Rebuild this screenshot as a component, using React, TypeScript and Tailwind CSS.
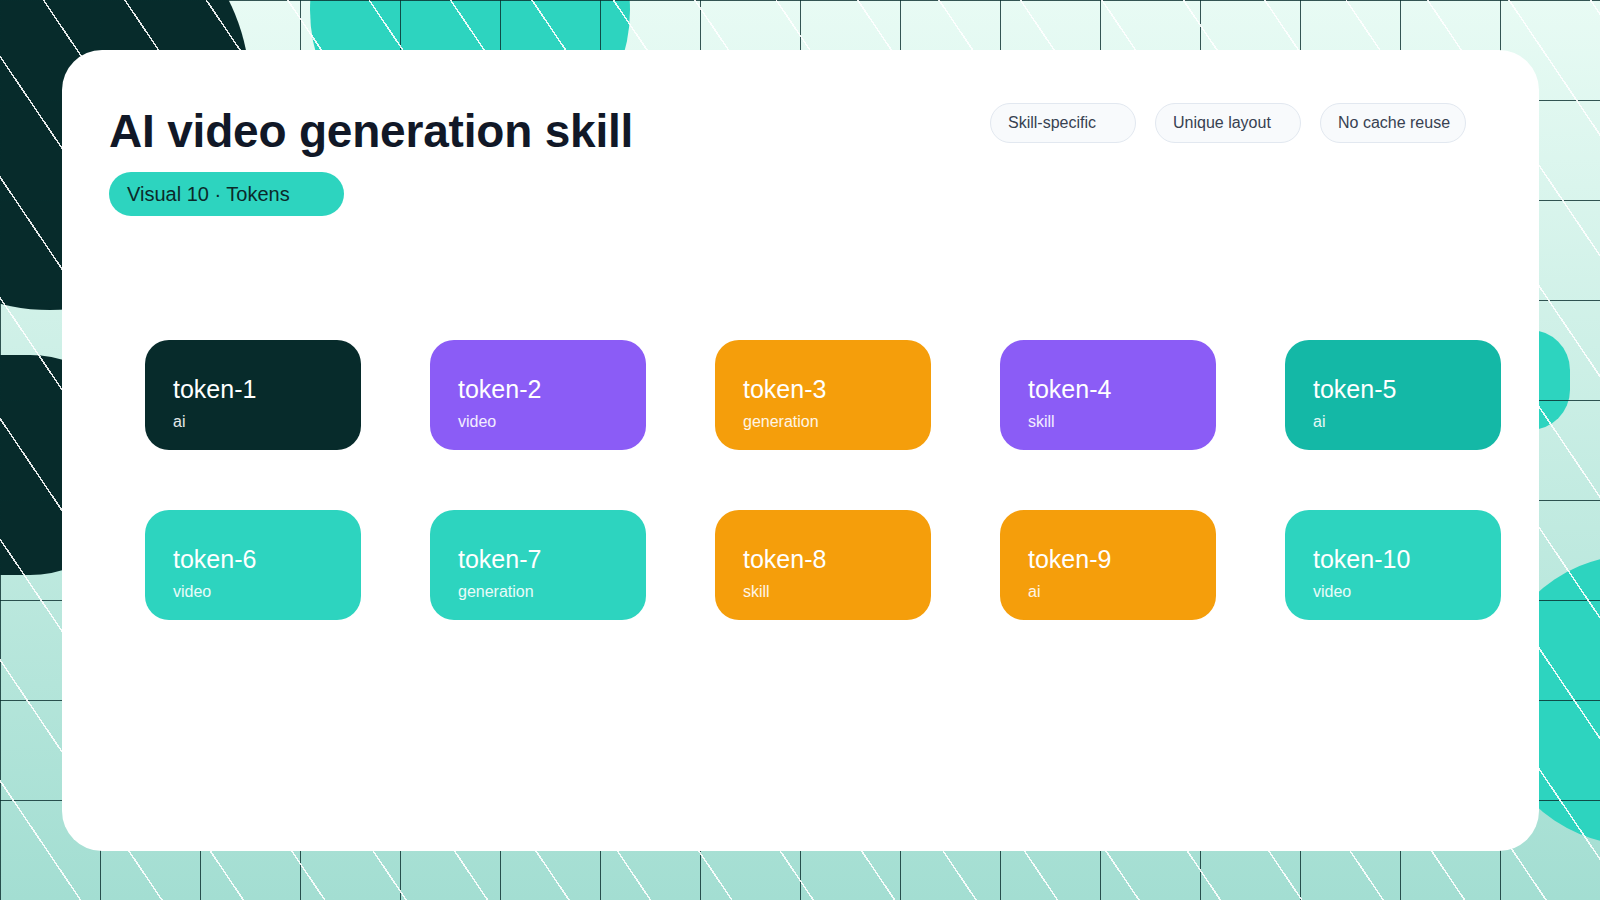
const tokens = [
  { name: "token-1", label: "ai", bg: "bg-[#072b2b]" },
  { name: "token-2", label: "video", bg: "bg-[#8b5cf6]" },
  { name: "token-3", label: "generation", bg: "bg-[#f59e0b]" },
  { name: "token-4", label: "skill", bg: "bg-[#8b5cf6]" },
  { name: "token-5", label: "ai", bg: "bg-[#14b8a6]" },
  { name: "token-6", label: "video", bg: "bg-[#2dd4bf]" },
  { name: "token-7", label: "generation", bg: "bg-[#2dd4bf]" },
  { name: "token-8", label: "skill", bg: "bg-[#f59e0b]" },
  { name: "token-9", label: "ai", bg: "bg-[#f59e0b]" },
  { name: "token-10", label: "video", bg: "bg-[#2dd4bf]" },
];

const chips = ["Skill-specific", "Unique layout", "No cache reuse"];

export default function App() {
  return (
    <div
      className="relative w-[1600px] h-[900px] overflow-hidden bg-gradient-to-b from-[#e8fbf4] to-[#a3ded2]"
      style={{ fontFamily: "'Liberation Sans', Arial, sans-serif" }}
    >
      {/* decorative shapes */}
      <div className="absolute -left-[150px] -top-[110px] w-[400px] h-[420px] rounded-full bg-[#072b2b]" />
      <div className="absolute -left-[260px] top-[355px] w-[400px] h-[220px] rounded-full bg-[#072b2b]" />
      <div className="absolute left-[310px] -top-[150px] w-[320px] h-[320px] rounded-full bg-[#2dd4bf]" />
      <div className="absolute left-[1490px] top-[330px] w-[80px] h-[100px] rounded-full bg-[#2dd4bf]" />
      <div className="absolute left-[1490px] top-[555px] w-[300px] h-[290px] rounded-full bg-[#2dd4bf]" />
      <div
        className="absolute inset-0"
        style={{
          backgroundImage:
            "linear-gradient(to right, rgba(7,43,43,0.8) 1px, transparent 1px), linear-gradient(to bottom, rgba(7,43,43,0.8) 1px, transparent 1px)",
          backgroundSize: "100px 100px",
        }}
      />
      <div
        className="absolute inset-0"
        style={{
          backgroundImage:
            "repeating-linear-gradient(56deg, transparent 0px, transparent 66px, rgba(255,255,255,0.9) 66px, rgba(255,255,255,0.9) 67.5px)",
        }}
      />

      {/* panel */}
      <div className="absolute left-[62px] top-[50px] w-[1477px] h-[801px] rounded-[40px] bg-white">
        <div className="flex justify-between pl-[47px] pr-[73px] pt-[53px]">
          <div className="flex flex-col items-start">
            <h1 className="text-[46px] leading-[56px] font-bold text-[#111827] tracking-[-0.2px]">
              AI video generation skill
            </h1>
            <div className="mt-[13px] w-[235px] h-[44px] rounded-full bg-[#2dd4bf] pl-[18px] flex items-center text-[20px] text-[#0b2a2a]">
              Visual 10 · Tokens
            </div>
          </div>
          <div className="flex gap-[19px]">
            {chips.map((c) => (
              <div
                key={c}
                className="w-[146px] h-[40px] rounded-full bg-[#f8fafc] border border-[#e2e8f0] pl-[17px] flex items-center text-[16px] text-[#374151]"
              >
                {c}
              </div>
            ))}
          </div>
        </div>
        <div className="grid grid-cols-[repeat(5,216px)] gap-x-[69px] gap-y-[60px] pl-[83px] mt-[124px]">
          {tokens.map((t) => (
            <div
              key={t.name}
              className={`h-[110px] rounded-[24px] ${t.bg} text-white pl-[28px] pt-[34px]`}
            >
              <div className="text-[25px] leading-[30px]">{t.name}</div>
              <div className="text-[16px] leading-[20px] mt-[8px] text-white/90">{t.label}</div>
            </div>
          ))}
        </div>
      </div>
    </div>
  );
}
